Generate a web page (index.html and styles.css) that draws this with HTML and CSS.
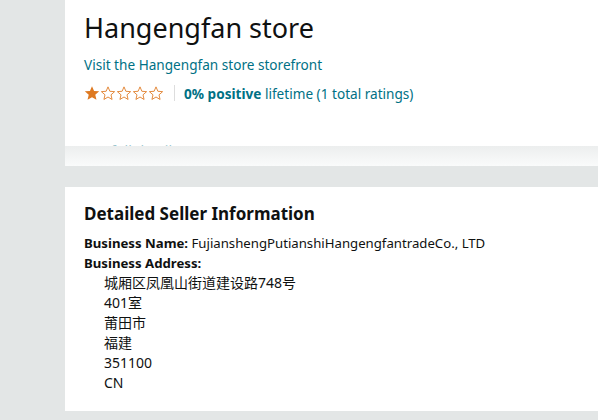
FILE: index.html
```html
<!DOCTYPE html>
<html>
<head>
<meta charset="utf-8">
<link rel="stylesheet" href="styles.css">
</head>
<body>
<div class="page">
  <section class="card card-top">
    <h1 class="store-name">Hangengfan store</h1>
    <a class="link storefront" href="#">Visit the Hangengfan store storefront</a>
    <div class="rating-row">
      <span class="stars">
        <svg width="16" height="16" viewBox="0 0 24 24"><path class="star-full" d="M12 1.8l3.1 7.1 7.7.6-5.9 5.1 1.8 7.6L12 18.2l-6.7 4 1.8-7.6-5.9-5.1 7.7-.6z"/></svg>
        <svg width="16" height="16" viewBox="0 0 24 24"><path class="star-empty" d="M12 2.8l2.8 6.6 7.1.6-5.4 4.7 1.6 7-6.1-3.7-6.1 3.7 1.6-7L2.1 10l7.1-.6z"/></svg>
        <svg width="16" height="16" viewBox="0 0 24 24"><path class="star-empty" d="M12 2.8l2.8 6.6 7.1.6-5.4 4.7 1.6 7-6.1-3.7-6.1 3.7 1.6-7L2.1 10l7.1-.6z"/></svg>
        <svg width="16" height="16" viewBox="0 0 24 24"><path class="star-empty" d="M12 2.8l2.8 6.6 7.1.6-5.4 4.7 1.6 7-6.1-3.7-6.1 3.7 1.6-7L2.1 10l7.1-.6z"/></svg>
        <svg width="16" height="16" viewBox="0 0 24 24"><path class="star-empty" d="M12 2.8l2.8 6.6 7.1.6-5.4 4.7 1.6 7-6.1-3.7-6.1 3.7 1.6-7L2.1 10l7.1-.6z"/></svg>
      </span>
      <span class="divider"></span>
      <a class="link rating-text" href="#"><b>0% positive</b> lifetime (1 total ratings)</a>
    </div>
    <div class="details-peek">See full details</div>
    <div class="fade"></div>
  </section>

  <section class="card card-info">
    <h2 class="info-title">Detailed Seller Information</h2>
    <div class="info-line"><b>Business Name:</b> FujianshengPutianshiHangengfantradeCo., LTD</div>
    <div class="info-line"><b>Business Address:</b></div>
    <div class="address">
      <div>城厢区凤凰山街道建设路748号</div>
      <div>401室</div>
      <div>莆田市</div>
      <div>福建</div>
      <div>351100</div>
      <div>CN</div>
    </div>
  </section>
</div>
</body>
</html>
```

FILE: styles.css
```css
* { box-sizing: border-box; }
html, body {
  margin: 0;
  padding: 0;
  background: #e3e6e6;
  font-family: "Noto Sans", "Noto Sans CJK SC", sans-serif;
  color: #0f1111;
}
.page {
  padding-left: 65px;
  display: flex;
  flex-direction: column;
  gap: 21px;
}
.card {
  background: #fff;
  padding-left: 19px;
}
.card-top {
  position: relative;
  height: 166px;
  overflow: hidden;
  padding-top: 8px;
}
.store-name {
  margin: 0;
  font-size: 27px;
  font-weight: 400;
  line-height: 40px;
}
.link {
  color: #007185;
  text-decoration: none;
}
.storefront {
  display: block;
  margin-top: 7px;
  font-size: 13.6px;
  line-height: 20px;
}
.rating-row {
  display: flex;
  align-items: center;
  height: 20px;
  margin-top: 8px;
  font-size: 13.6px;
}
.stars { display: flex; }
.stars svg { display: block; }
.star-full { fill: #de7921; }
.star-empty { fill: none; stroke: #de7921; stroke-width: 1.3; stroke-linejoin: miter; }
.divider {
  width: 1px;
  height: 16px;
  background: #ddd;
  margin: 0 9px 0 10px;
}
.rating-text b { font-weight: 700; }
.details-peek {
  margin-top: 38px;
  font-size: 14px;
  line-height: 20px;
  color: #007185;
  opacity: 0.4;
}
.fade {
  position: absolute;
  left: 0;
  right: 0;
  bottom: 0;
  height: 20px;
  background: linear-gradient(#eceeee, #fafbfb);
}
.card-info {
  padding-top: 14px;
  padding-bottom: 18px;
  font-size: 13.2px;
  line-height: 20px;
}
.info-title {
  margin: 0 0 6px;
  font-size: 17px;
  font-weight: 700;
  line-height: 26px;
}
.info-line b { font-weight: 700; }
.address {
  padding-left: 20px;
  font-size: 14px;
}
```
